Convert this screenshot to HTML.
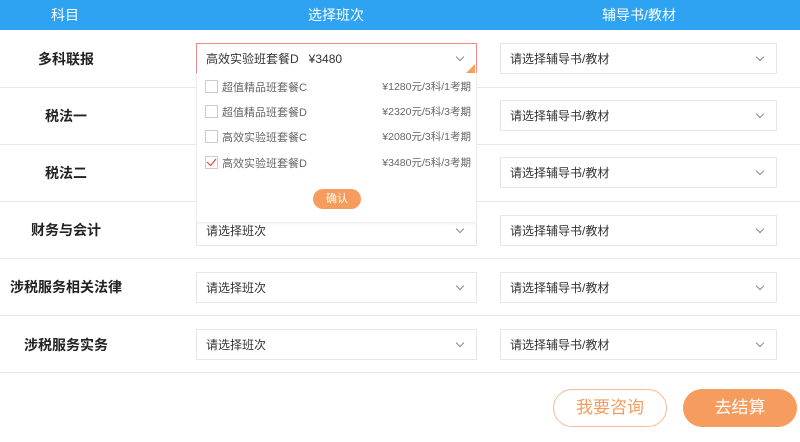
<!DOCTYPE html>
<html><head><meta charset="utf-8"><style>
*{margin:0;padding:0;box-sizing:border-box}
body{width:800px;height:442px;background:#fff;font-family:"Liberation Sans","Noto Sans CJK SC",sans-serif;position:relative;overflow:hidden;color:#333}
.hd{position:absolute;left:0;top:0;width:800px;height:30px;background:#2ea3f2;color:#fff;font-size:14px}
.hd span{position:absolute;top:5px;transform:translateX(-50%)}
.line{position:absolute;left:0;width:800px;height:1px;background:#e8e8e8}
.lab{position:absolute;width:132px;left:0;text-align:center;font-weight:bold;font-size:14px;color:#222}
.sel{position:absolute;height:31px;border:1px solid #e6e6e6;background:#fff;font-size:12px;color:#333;padding:6px 0 0 9px}
.sel:after{content:"";position:absolute;right:13px;top:10px;width:5px;height:5px;border-right:1px solid #888;border-bottom:1px solid #888;transform:rotate(45deg)}
.dd{position:absolute;left:196px;top:73px;width:281px;height:150px;background:#fff;border:1px solid #eee;border-top:none;box-shadow:0 1px 2px rgba(0,0,0,.05);font-size:10.5px;color:#666}
.op{position:absolute;left:8px;width:266px;height:14px}
.cb{position:absolute;left:0;top:0;width:13px;height:13px;border:1px solid #ccc}
.op .n{position:absolute;left:17px;top:-1px;font-size:11px}
.op .p{position:absolute;right:0;top:-1px}
.btn{position:absolute;border-radius:20px;font-size:17px;text-align:center}
</style></head><body>
<div class="hd"><span style="left:65px">科目</span><span style="left:336px">选择班次</span><span style="left:639px">辅导书/教材</span></div>
<div class="line" style="top:87px"></div><div class="line" style="top:144px"></div><div class="line" style="top:201px"></div><div class="line" style="top:258px"></div><div class="line" style="top:315px"></div><div class="line" style="top:372px"></div>
<div class="lab" style="top:49px">多科联报</div>
<div class="lab" style="top:106px">税法一</div>
<div class="lab" style="top:163px">税法二</div>
<div class="lab" style="top:220px">财务与会计</div>
<div class="lab" style="top:277px">涉税服务相关法律</div>
<div class="lab" style="top:335px">涉税服务实务</div>

<div class="sel" style="left:196px;top:43px;width:281px;border-color:#f08a8a">高效实验班套餐D&nbsp;&nbsp;&nbsp;¥3480</div>
<div style="position:absolute;left:466px;top:64px;width:0;height:0;border-left:9px solid transparent;border-bottom:9px solid #f5a05e"></div>
<div class="sel" style="left:196px;top:215px;width:281px">请选择班次</div>
<div class="sel" style="left:196px;top:272px;width:281px">请选择班次</div>
<div class="sel" style="left:196px;top:329px;width:281px">请选择班次</div>
<div class="sel" style="left:500px;top:43px;width:277px">请选择辅导书/教材</div>
<div class="sel" style="left:500px;top:100px;width:277px">请选择辅导书/教材</div>
<div class="sel" style="left:500px;top:157px;width:277px">请选择辅导书/教材</div>
<div class="sel" style="left:500px;top:215px;width:277px">请选择辅导书/教材</div>
<div class="sel" style="left:500px;top:272px;width:277px">请选择辅导书/教材</div>
<div class="sel" style="left:500px;top:329px;width:277px">请选择辅导书/教材</div>

<div class="dd">
<div class="op" style="top:7px"><div class="cb"></div><span class="n">超值精品班套餐C</span><span class="p">¥1280元/3科/1考期</span></div>
<div class="op" style="top:32px"><div class="cb"></div><span class="n">超值精品班套餐D</span><span class="p">¥2320元/5科/3考期</span></div>
<div class="op" style="top:57px"><div class="cb"></div><span class="n">高效实验班套餐C</span><span class="p">¥2080元/3科/1考期</span></div>
<div class="op" style="top:83px"><div class="cb"><svg width="13" height="13" style="position:absolute;left:-1px;top:-1px"><path d="M2 6 L5.5 9.5 L11 3" stroke="#e84545" stroke-width="1.2" fill="none"/></svg></div><span class="n">高效实验班套餐D</span><span class="p">¥3480元/5科/3考期</span></div>
<div style="position:absolute;left:116px;top:116px;width:48px;height:20px;border-radius:10px;background:#f59c5e;color:#fff;font-size:11px;text-align:center;line-height:20px">确认</div>
</div>

<div class="btn" style="left:553px;top:389px;width:114px;height:38px;border:1px solid #f8bb92;color:#f59c5e;line-height:36px">我要咨询</div>
<div class="btn" style="left:683px;top:389px;width:114px;height:38px;background:#f59c5e;color:#fff;line-height:38px">去结算</div>
</body></html>
